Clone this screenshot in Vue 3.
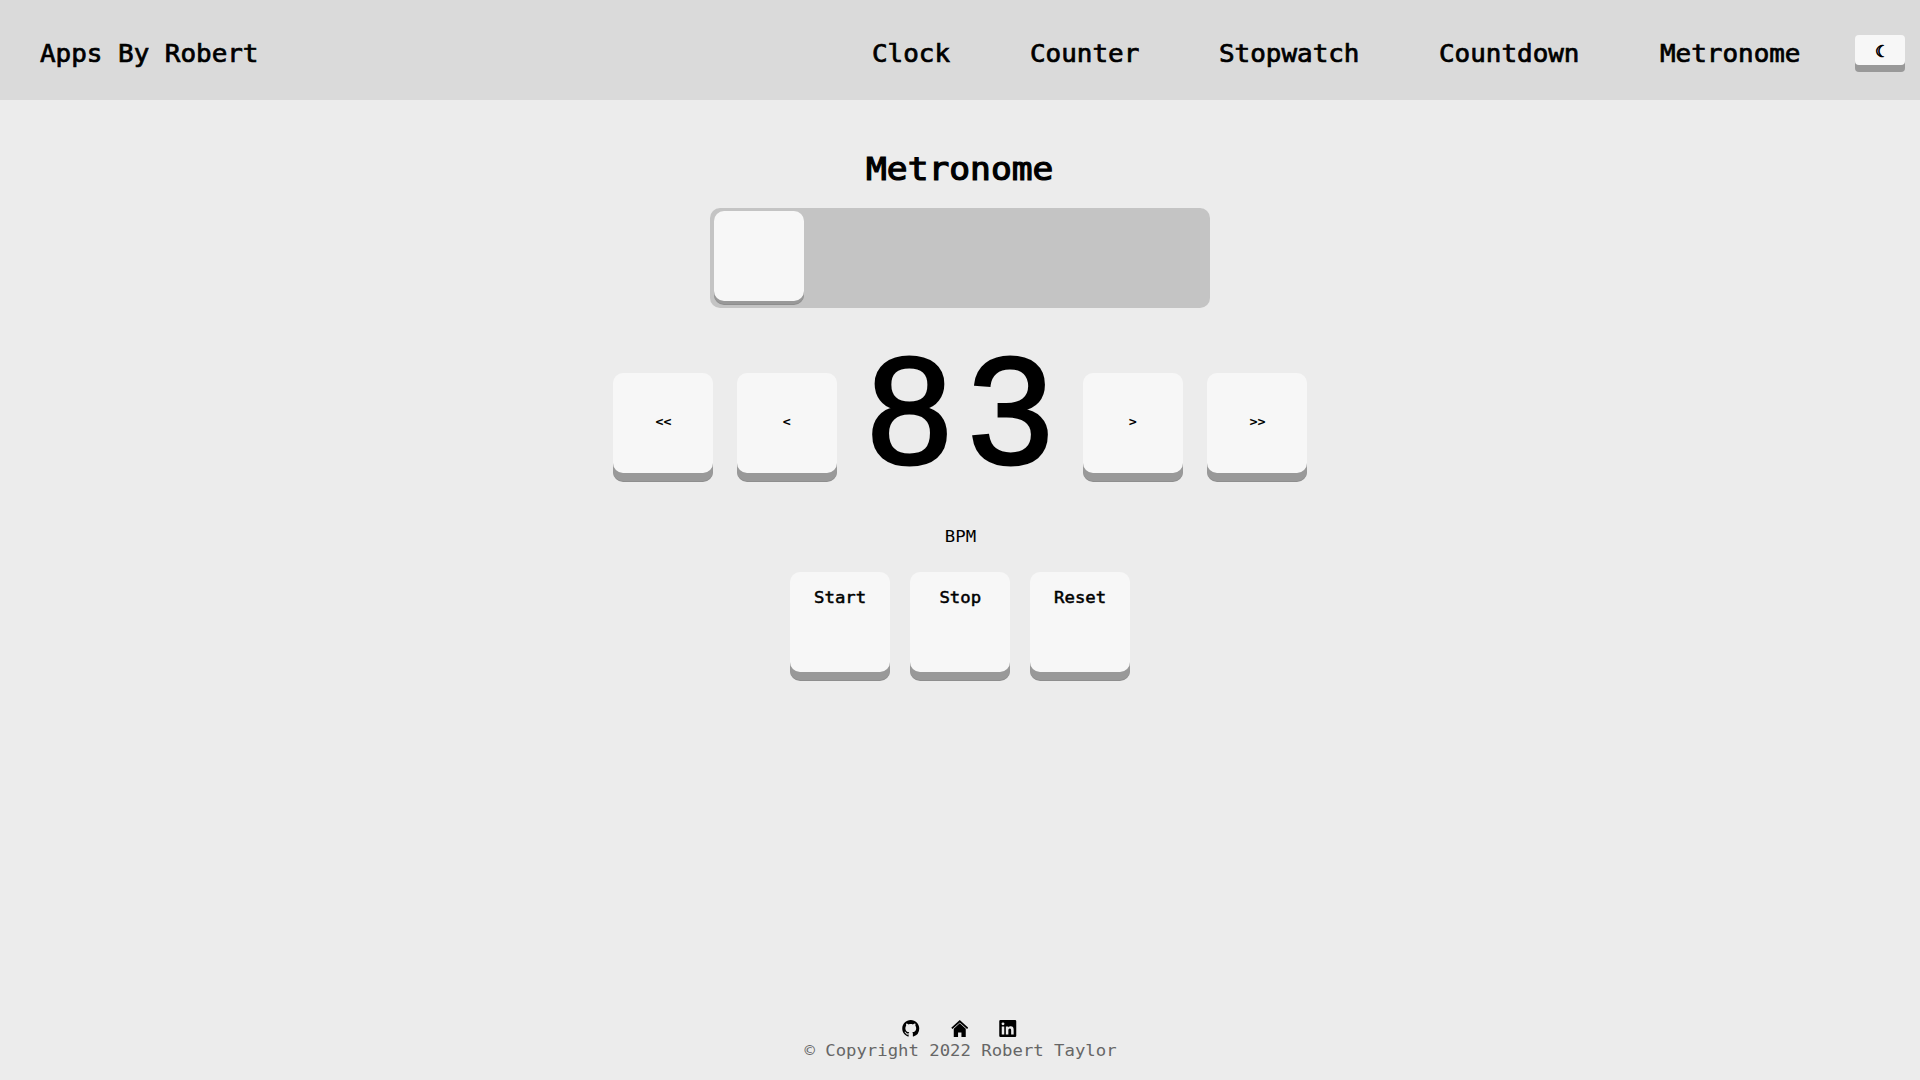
<script setup>
import { ref } from 'vue'

const links = ['Clock', 'Counter', 'Stopwatch', 'Countdown', 'Metronome']
const bpm = ref(83)
const actions = ['Start', 'Stop', 'Reset']
</script>

<template>
  <div class="page">
    <header class="bar">
      <a class="brand">Apps By Robert</a>
      <nav class="links">
        <a v-for="link in links" :key="link" :style="{ width: link.length * 0.65 + 'em' }">{{ link }}</a>
      </nav>
      <button class="theme key">☾</button>
    </header>

    <main class="main">
      <h1 class="wide">Metronome</h1>
      <div class="track"><div class="knob"></div></div>
      <div class="tempo">
        <button class="key step" @click="bpm -= 5"><span class="wide">&lt;&lt;</span></button>
        <button class="key step" @click="bpm--"><span class="wide">&lt;</span></button>
        <div class="value"><span>{{ bpm }}</span></div>
        <button class="key step" @click="bpm++"><span class="wide">&gt;</span></button>
        <button class="key step" @click="bpm += 5"><span class="wide">&gt;&gt;</span></button>
      </div>
      <p class="unit wide">BPM</p>
      <div class="actions">
        <button v-for="action in actions" :key="action" class="key action">
          <span class="wide">{{ action }}</span>
        </button>
      </div>
    </main>

    <footer class="footer">
      <div class="icons">
        <svg viewBox="0 0 16 16"><path d="M8 0C3.58 0 0 3.58 0 8c0 3.54 2.29 6.53 5.47 7.59.4.07.55-.17.55-.38 0-.19-.01-.82-.01-1.49-2.01.37-2.53-.49-2.69-.94-.09-.23-.48-.94-.82-1.13-.28-.15-.68-.52-.01-.53.63-.01 1.08.58 1.23.82.72 1.21 1.87.87 2.33.66.07-.52.28-.87.51-1.07-1.78-.2-3.64-.89-3.64-3.95 0-.87.31-1.59.82-2.15-.08-.2-.36-1.02.08-2.12 0 0 .67-.21 2.2.82.64-.18 1.32-.27 2-.27s1.36.09 2 .27c1.53-1.04 2.2-.82 2.2-.82.44 1.1.16 1.92.08 2.12.51.56.82 1.27.82 2.15 0 3.07-1.87 3.75-3.65 3.95.29.25.54.73.54 1.48 0 1.07-.01 1.93-.01 2.2 0 .21.15.46.55.38A8 8 0 0 0 16 8c0-4.42-3.58-8-8-8z" /></svg>
        <svg viewBox="0 0 17 17"><path d="M8.500 0 17 7.800l-1.200 1.300L8.500 2.400 1.200 9.100 0 7.800z" /><path d="m8.500 3.200 6 5.500V17h-4.300v-4.600H6.800V17H2.500V8.700z" /></svg>
        <svg viewBox="0 0 17 17"><path fill-rule="evenodd" d="M1.200 0h14.600A1.200 1.200 0 0 1 17 1.200v14.600a1.200 1.200 0 0 1-1.200 1.200H1.200A1.200 1.200 0 0 1 0 15.800V1.200A1.200 1.200 0 0 1 1.200 0zM2.500 6.400v8.100H5V6.400zM3.750 2.400a1.450 1.450 0 1 0 0 2.900 1.450 1.450 0 0 0 0-2.900zM6.600 6.400v8.100h2.500v-4c0-1.100.3-2.100 1.500-2.100s1.300 1.100 1.300 2.200v3.900h2.500V10c0-2.200-.5-3.800-3-3.800-1.200 0-2 .6-2.300 1.300V6.400z" /></svg>
      </div>
      <p class="wide">© Copyright 2022 Robert Taylor</p>
    </footer>
  </div>
</template>

<style>
body {
  margin: 0;
}
</style>

<style scoped>
.page {
  box-sizing: border-box;
  height: 1080px;
  display: flex;
  flex-direction: column;
  background: #ececec;
  color: #000;
  font-family: "DejaVu Sans Mono", monospace;
  font-size: 16px;
}
.wide {
  display: inline-block;
  white-space: nowrap;
  transform: scaleX(1.08);
}
.bar {
  flex: none;
  display: flex;
  align-items: center;
  height: 100px;
  padding: 0 15px 0 40px;
  box-sizing: border-box;
  background: #dadada;
}
.brand,
.links {
  font-size: 24px;
  line-height: 28px;
  padding-top: 8px;
  -webkit-text-stroke: 0.7px #000;
}
.brand,
.links a {
  transform: scaleX(1.08);
  transform-origin: left;
  white-space: nowrap;
}
.links {
  display: flex;
  gap: 80px;
  margin-left: auto;
}
.key {
  padding: 0;
  border: 0;
  border-radius: 10px;
  background: #f7f7f7;
  box-shadow: 0 8px #999, 0 9px #8e8e8e;
  color: #000;
  font-family: inherit;
}
.theme {
  width: 50px;
  height: 30px;
  margin-left: 55px;
  border-radius: 4px;
  box-shadow: 0 7px #999;
  font-size: 16px;
  padding-top: 2px;
  -webkit-text-stroke: 0.8px #000;
}
h1 {
  margin: 49px 0 19px;
  font-size: 32px;
  line-height: 40px;
  font-weight: 400;
  -webkit-text-stroke: 1.2px #000;
}
.main {
  flex: 1;
  display: flex;
  flex-direction: column;
  align-items: center;
}
.track {
  box-sizing: border-box;
  width: 500px;
  height: 100px;
  padding: 3px 4px;
  border-radius: 10px;
  background: #c4c4c4;
}
.knob {
  width: 90px;
  height: 90px;
  border-radius: 10px;
  background: #f7f7f7;
  box-shadow: 0 3px #999, 0 4px #8e8e8e;
}
.tempo {
  display: flex;
  align-items: center;
  gap: 24px;
  height: 100px;
  margin-top: 65px;
}
.step {
  width: 100px;
  height: 100px;
  padding-bottom: 2px;
  font-size: 12.3px;
  font-weight: 700;
}
.value {
  width: 198px;
  display: flex;
  justify-content: center;
  font-family: "Liberation Sans", Arial, sans-serif;
  font-size: 153px;
  line-height: 100px;
  letter-spacing: 16px;
  -webkit-text-stroke: 3px #000;
}
.value span {
  margin: -25px -16px 0 0;
}
.unit {
  margin: 54px 0 25px;
  font-size: 16px;
  line-height: 20px;
}
.actions {
  display: flex;
  gap: 20px;
}
.action {
  width: 100px;
  height: 100px;
  padding-bottom: 50px;
  font-size: 16px;
  -webkit-text-stroke: 0.5px #000;
}
.footer {
  flex: none;
  display: flex;
  flex-direction: column;
  align-items: center;
  height: 60px;
}
.icons {
  display: flex;
  gap: 31px;
  margin-right: 1px;
}
.icons svg {
  display: block;
  width: 17.5px;
  height: 17px;
}
.footer p {
  margin: 4px 0 0;
  color: #666;
  font-size: 16px;
  line-height: 20px;
}
</style>
